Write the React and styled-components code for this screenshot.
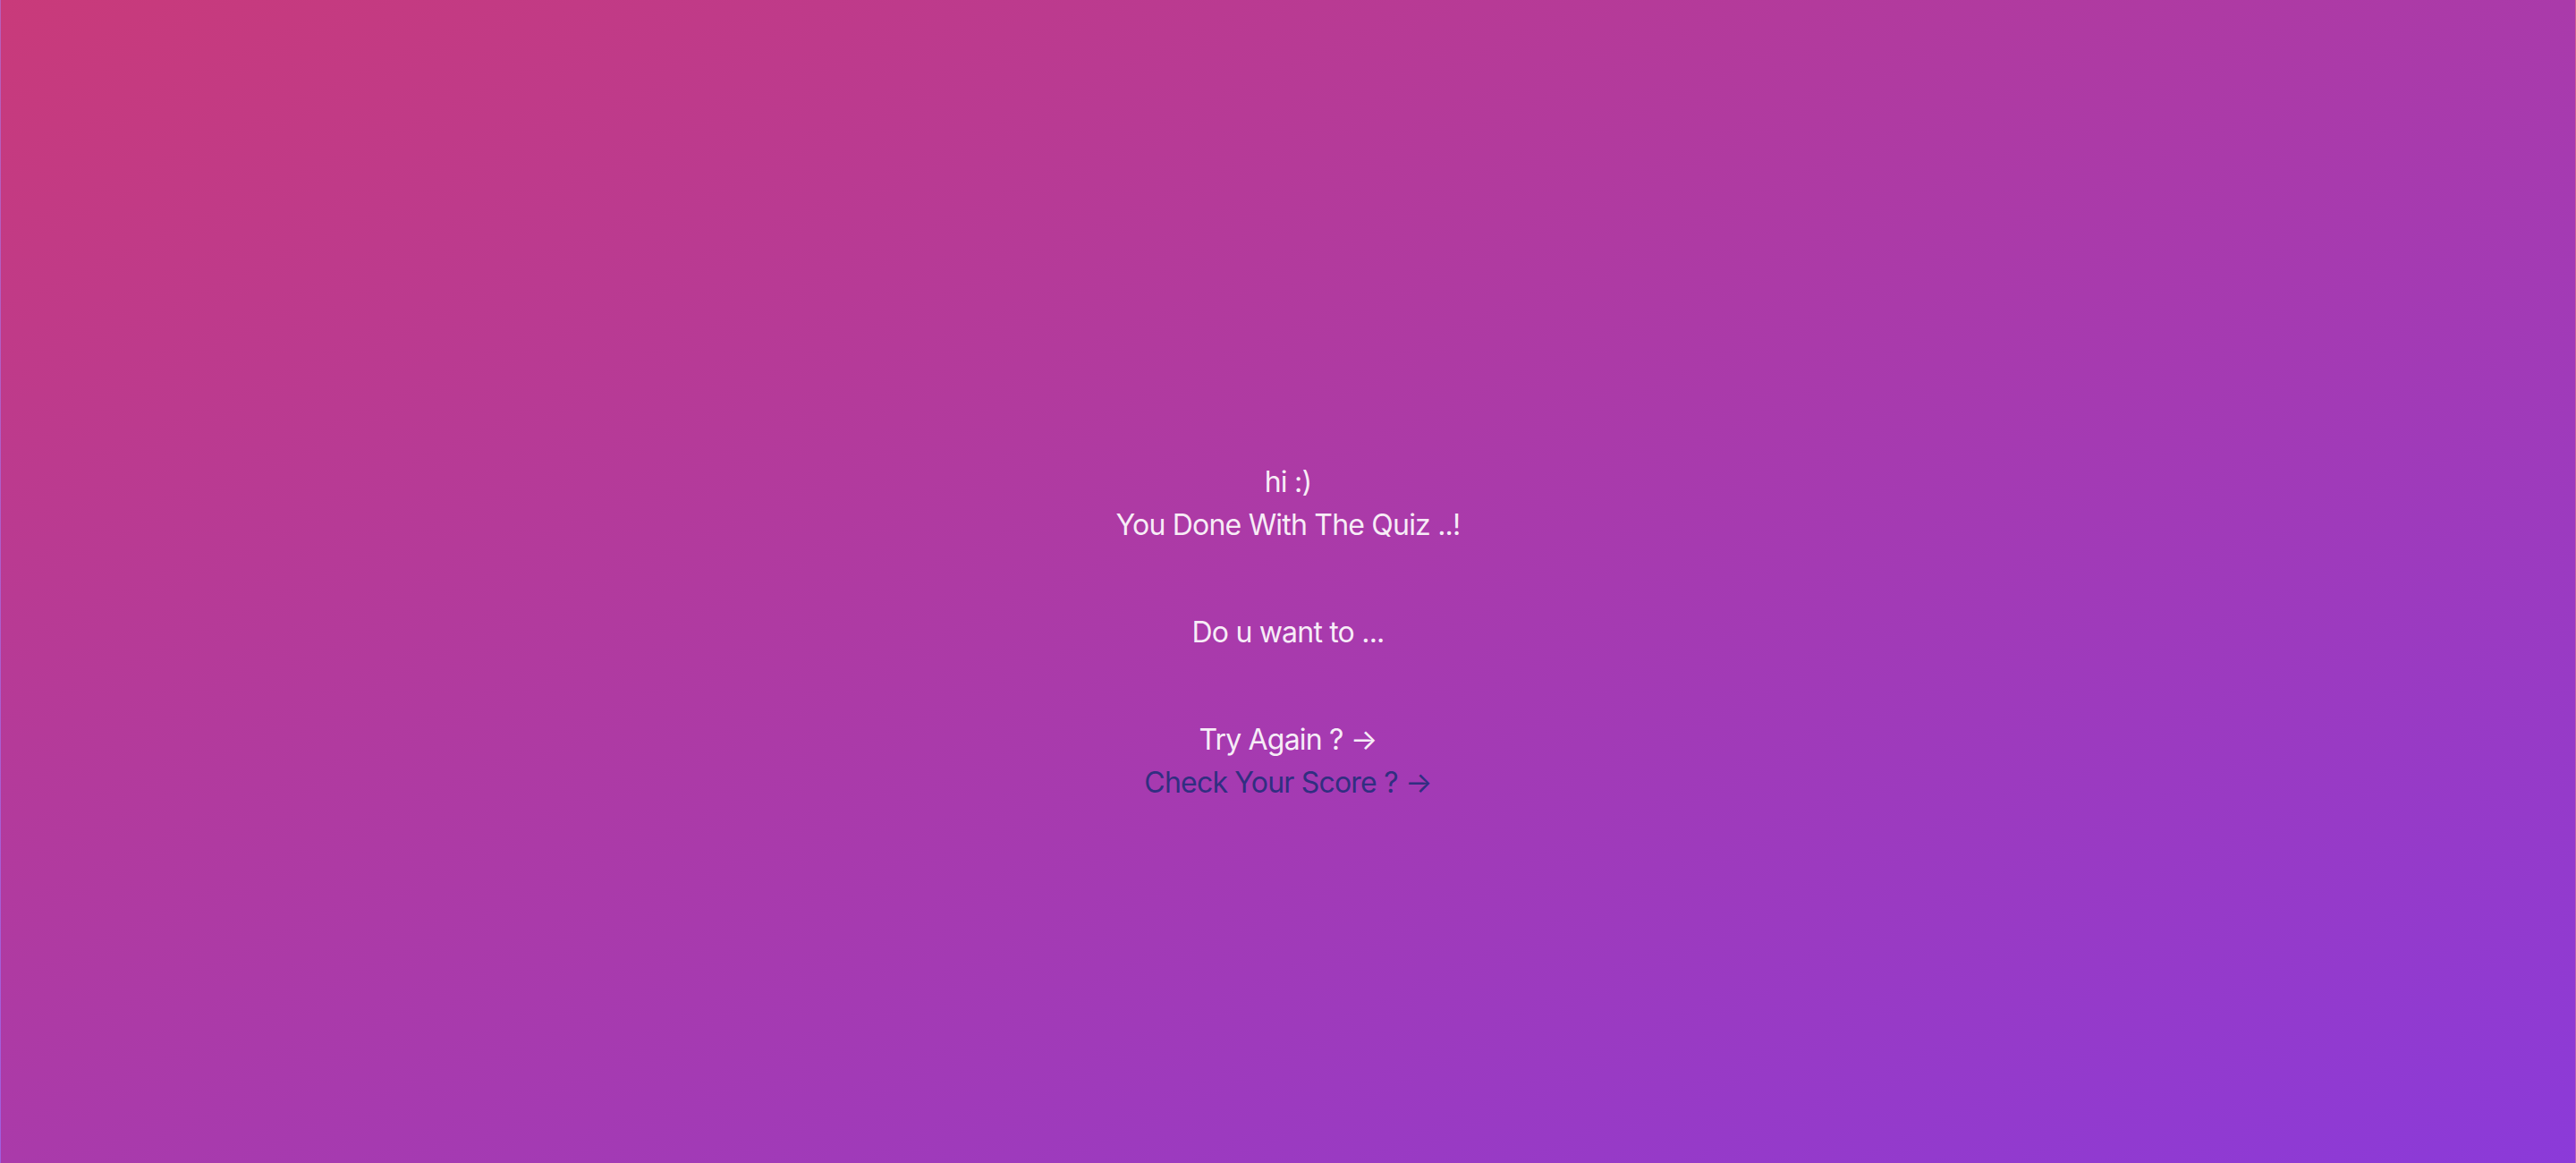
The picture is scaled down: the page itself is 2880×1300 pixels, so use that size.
import React from "react";
import styled, { createGlobalStyle } from "styled-components";

const GlobalStyle = createGlobalStyle`
  html, body {
    margin: 0;
    padding: 0;
  }
  body {
    font-family: Inter, "Noto Sans", "Liberation Sans", sans-serif;
    -webkit-font-smoothing: antialiased;
  }
  * { box-sizing: border-box; }
`;

const Page = styled.main`
  min-height: 100vh;
  width: 100%;
  display: flex;
  flex-direction: column;
  align-items: center;
  padding-top: 515px;
  gap: 72px;
  background: linear-gradient(to bottom right, #c93a7a 0%, #aa3aaa 50%, #8b3ad9 100%);
  border-left: 1px solid rgba(255, 255, 255, 0.18);
  border-right: 1px solid rgba(255, 255, 255, 0.18);
`;

const Group = styled.section`
  display: flex;
  flex-direction: column;
  align-items: center;
`;

const Line = styled.p`
  margin: 0;
  font-size: 32px;
  line-height: 48px;
  letter-spacing: -0.025em;
  color: rgba(255, 255, 255, 0.92);
  text-align: center;
`;

const Action = styled.a`
  font-size: 32px;
  line-height: 48px;
  letter-spacing: -0.025em;
  text-decoration: none;
  cursor: pointer;
  color: ${(p) => (p.$tone === "dark" ? "#312e81" : "rgba(255, 255, 255, 0.92)")};
`;

export default function App() {
  return (
    <>
      <GlobalStyle />
      <Page>
        <Group>
          <Line>hi :)</Line>
          <Line>You Done With The Quiz ..!</Line>
        </Group>
        <Group>
          <Line>Do u want to ...</Line>
        </Group>
        <Group>
          <Action href="#">Try Again ? →</Action>
          <Action href="#" $tone="dark">Check Your Score ? →</Action>
        </Group>
      </Page>
    </>
  );
}
